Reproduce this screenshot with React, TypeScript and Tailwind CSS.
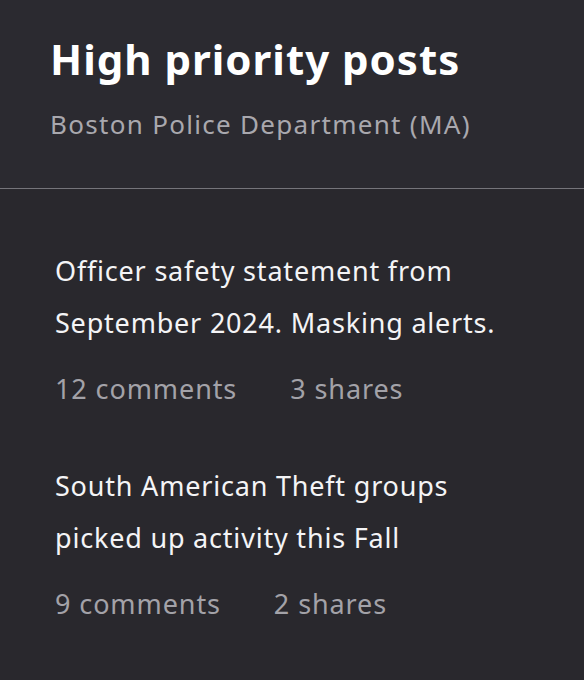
import React from 'react';

interface Post {
  title: string[];
  comments: number;
  shares: number;
}

const posts: Post[] = [
  {
    title: ['Officer safety statement from', 'September 2024. Masking alerts.'],
    comments: 12,
    shares: 3,
  },
  {
    title: ['South American Theft groups', 'picked up activity this Fall'],
    comments: 9,
    shares: 2,
  },
];

const App: React.FC = () => {
  return (
    <div
      className="min-h-screen w-full bg-[#29282d] text-white"
      style={{ fontFamily: '"Noto Sans", "Open Sans", sans-serif' }}
    >
      <header className="bg-[#2b2a30] px-[50px] pt-[34px] pb-[48px] border-b border-[#75747a]">
        <h1 className="text-[42px] leading-[50px] font-bold tracking-[1px]">High priority posts</h1>
        <p className="mt-[24px] text-[26px] leading-[32px] tracking-[1.3px] text-[#a9a8ae]">
          Boston Police Department (MA)
        </p>
      </header>

      <main className="px-[55px] pt-[56px] flex flex-col gap-[53px]">
        {posts.map((post) => (
          <article key={post.title[0]}>
            <p className="text-[27px] leading-[52px] tracking-[0.8px] text-[#f4f4f6]">
              {post.title.map((line) => (
                <span key={line} className="block">
                  {line}
                </span>
              ))}
            </p>
            <div className="mt-[22px] flex gap-[53px] text-[27px] leading-[36px] tracking-[0.9px] text-[#a3a2a8]">
              <span>{post.comments} comments</span>
              <span>{post.shares} shares</span>
            </div>
          </article>
        ))}
      </main>
    </div>
  );
};

export default App;
